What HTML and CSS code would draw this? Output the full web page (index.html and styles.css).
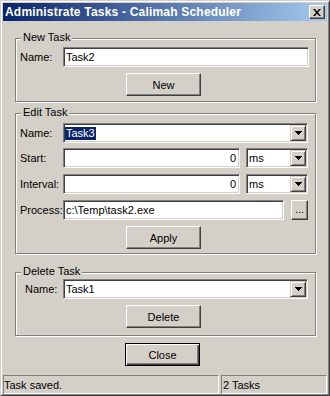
FILE: index.html
```html
<!DOCTYPE html>
<html>
<head>
<meta charset="utf-8">
<link rel="stylesheet" href="styles.css">
</head>
<body>
<div class="window">
  <div class="titlebar">
    <span class="title">Administrate Tasks - Calimah Scheduler</span>
    <span class="tb-close"><svg width="8" height="7" viewBox="0 0 8 7"><path d="M0 0h2l2 2.5L6 0h2L5 3.5 8 7H6L4 4.5 2 7H0l3-3.5z" fill="#000"/></svg></span>
  </div>
  <div class="client">
    <div class="group g-new">
      <span class="legend">New Task</span>
      <div class="row"><span class="lbl">Name:</span><div class="edit grow">Task2</div></div>
      <div class="btnrow"><div class="btn">New</div></div>
    </div>
    <div class="group g-edit">
      <span class="legend">Edit Task</span>
      <div class="row"><span class="lbl">Name:</span><div class="edit combo grow"><span class="sel">Task3</span><span class="dd"><svg width="7" height="4" viewBox="0 0 7 4" shape-rendering="crispEdges"><path d="M0 0h7v1H0zM1 1h5v1H1zM2 2h3v1H2zM3 3h1v1H3z" fill="#000"/></svg></span></div></div>
      <div class="row r-start"><span class="lbl">Start:</span><div class="edit num w-num">0</div><div class="edit combo grow">ms<span class="dd"><svg width="7" height="4" viewBox="0 0 7 4" shape-rendering="crispEdges"><path d="M0 0h7v1H0zM1 1h5v1H1zM2 2h3v1H2zM3 3h1v1H3z" fill="#000"/></svg></span></div></div>
      <div class="row r-int"><span class="lbl">Interval:</span><div class="edit num w-num">0</div><div class="edit combo grow">ms<span class="dd"><svg width="7" height="4" viewBox="0 0 7 4" shape-rendering="crispEdges"><path d="M0 0h7v1H0zM1 1h5v1H1zM2 2h3v1H2zM3 3h1v1H3z" fill="#000"/></svg></span></div></div>
      <div class="row r-proc"><span class="lbl">Process:</span><div class="edit grow">c:\Temp\task2.exe</div><div class="btn small">...</div></div>
      <div class="btnrow"><div class="btn">Apply</div></div>
    </div>
    <div class="group g-del">
      <span class="legend">Delete Task</span>
      <div class="row"><span class="lbl">Name:</span><div class="edit combo grow">Task1<span class="dd"><svg width="7" height="4" viewBox="0 0 7 4" shape-rendering="crispEdges"><path d="M0 0h7v1H0zM1 1h5v1H1zM2 2h3v1H2zM3 3h1v1H3z" fill="#000"/></svg></span></div></div>
      <div class="btnrow"><div class="btn">Delete</div></div>
    </div>
    <div class="closerow"><div class="btn default">Close</div></div>
  </div>
  <div class="statusbar">
    <div class="panel p1">Task saved.</div>
    <div class="panel p2">2 Tasks</div>
  </div>
</div>
</body>
</html>
```
FILE: styles.css
```css
html, body {
  margin: 0;
  padding: 0;
  background: #d4d0c8;
}
body {
  font-family: "Liberation Sans", Arial, sans-serif;
  font-size: 11px;
  color: #000;
}
.window {
  width: 330px;
  height: 396px;
  box-sizing: border-box;
  background: #d4d0c8;
  border: 1px solid;
  border-color: #d4d0c8 #404040 #404040 #d4d0c8;
  box-shadow: inset 1px 1px #fff, inset -1px -1px #808080;
  padding: 2px 2px 1px 2px;
  display: flex;
  flex-direction: column;
}
.titlebar {
  height: 18px;
  flex: none;
  background: linear-gradient(to right, #0a246a, #a6caf0);
  display: flex;
  align-items: center;
  padding-left: 2px;
}
.title {
  color: #fff;
  font-weight: bold;
  font-size: 12px;
  letter-spacing: 0.2px;
  white-space: nowrap;
}
.tb-close {
  margin-left: auto;
  margin-right: 2px;
  width: 16px;
  height: 14px;
  box-sizing: border-box;
  background: #d4d0c8;
  border: 1px solid;
  border-color: #fff #404040 #404040 #fff;
  box-shadow: inset -1px -1px #808080;
  display: flex;
  align-items: center;
  justify-content: center;
}
.tb-close svg { display: block; margin-left: -1px; }
.client {
  padding: 17px 11px 0 12px;
  display: flex;
  flex-direction: column;
}
.group {
  position: relative;
  border: 1px solid #808080;
  box-shadow: inset 1px 1px #fff, 1px 1px #fff;
  display: flex;
  flex-direction: column;
}
.legend {
  position: absolute;
  top: -8px;
  left: 5px;
  padding: 0 2px;
  line-height: 13px;
  background: #d4d0c8;
  white-space: nowrap;
}
.g-new { padding: 8px 6px 5px 4px; }
.g-edit { margin-top: 11px; padding: 9px 7px 4px 4px; }
.g-del { margin-top: 18px; padding: 6px 7px 7px 9px; }
.row {
  display: flex;
  align-items: center;
  height: 20px;
}
.lbl { width: 43px; flex: none; white-space: nowrap; }
.g-del .lbl { width: 38px; }
.r-start { margin-top: 5px; }
.r-int, .r-proc { margin-top: 6px; }
.r-start .combo, .r-int .combo { margin-left: 6px; }
.r-proc .small { margin-left: 7px; }
.edit {
  height: 20px;
  box-sizing: border-box;
  background: #fff;
  border: 1px solid;
  border-color: #808080 #fff #fff #808080;
  box-shadow: inset 1px 1px #404040, inset -1px -1px #d4d0c8;
  padding: 0 2px;
  display: flex;
  align-items: center;
  white-space: nowrap;
}
.grow { flex: 1; min-width: 0; }
.w-num { width: 177px; flex: none; }
.num { justify-content: flex-end; padding-right: 3px; }
.combo { padding-right: 1px; }
.sel {
  background: #0a246a;
  color: #fff;
  margin-left: -1px;
  padding: 0 1px;
  line-height: 13px;
}
.dd {
  margin-left: auto;
  width: 16px;
  height: 16px;
  box-sizing: border-box;
  background: #d4d0c8;
  border: 1px solid;
  border-color: #d4d0c8 #404040 #404040 #d4d0c8;
  box-shadow: inset 1px 1px #fff, inset -1px -1px #808080;
  display: flex;
  align-items: center;
  justify-content: center;
}
.dd svg { display: block; }
.btnrow { display: flex; margin-top: 6px; }
.g-new .btnrow .btn, .g-edit .btnrow .btn { margin-left: 106px; }
.g-del .btnrow .btn { margin-left: 101px; }
.btn {
  width: 75px;
  height: 23px;
  box-sizing: border-box;
  flex: none;
  background: #d4d0c8;
  border: 1px solid;
  border-color: #fff #404040 #404040 #fff;
  box-shadow: inset -1px -1px #808080;
  display: flex;
  align-items: center;
  justify-content: center;
  white-space: nowrap;
}
.btn.small { width: 17px; height: 20px; padding-bottom: 2px; }
.closerow { display: flex; margin-top: 7px; }
.btn.default {
  margin-left: 110px;
  border: 1px solid #000;
  box-shadow: inset 1px 1px #fff, inset -1px -1px #404040, inset -2px -2px #808080;
}
.statusbar {
  margin-top: auto;
  display: flex;
  gap: 2px;
  height: 19px;
  flex: none;
}
.panel {
  box-sizing: border-box;
  border: 1px solid;
  border-color: #808080 #fff #fff #808080;
  display: flex;
  align-items: center;
  white-space: nowrap;
}
.p1 { width: 216px; flex: none; }
.p2 { flex: 1; padding-left: 1px; }
```
